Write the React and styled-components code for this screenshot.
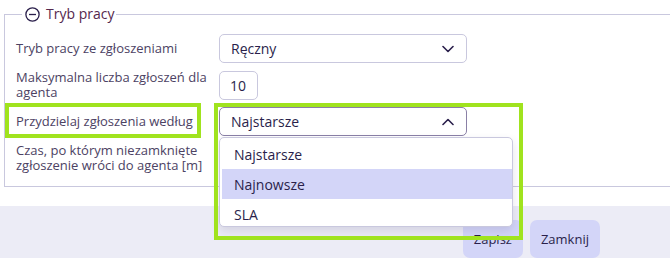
import React from "react";
import styled, { createGlobalStyle } from "styled-components";

const colors = {
  ink: "#2a1f4b",
  label: "#4c4263",
  line: "#c9c8de",
  lilac: "#d3d5f8",
  footer: "#ececf6",
  lime: "#a0e31e",
};

const GlobalStyle = createGlobalStyle`
  body {
    margin: 0;
    background: #fff;
    font-family: "Open Sans", "Liberation Sans", sans-serif;
    overflow: hidden;
  }
`;

const Page = styled.div`
  width: 670px;
  height: 258px;
  display: flex;
  flex-direction: column;
  overflow: hidden;
`;

const Fieldset = styled.fieldset`
  margin: 5px -20px 0 4px;
  padding: 11px 0 13px 11px;
  border: 1px solid ${colors.line};
  border-radius: 0;
`;

const Legend = styled.legend`
  display: flex;
  align-items: center;
  gap: 6px;
  padding: 0 2px 0 3px;
  margin-left: 6px;
  color: #55284d;
  font-size: 14px;
  line-height: 18px;
`;

const Grid = styled.div`
  display: grid;
  grid-template-columns: 203px 1fr;
  row-gap: 7px;
`;

const Label = styled.div`
  position: relative;
  display: flex;
  align-items: center;
  color: ${colors.label};
  font-size: 13px;
  line-height: 15px;
  padding-right: 8px;
`;

const Cell = styled.div`
  position: relative;
  display: flex;
  align-items: center;
`;

const Frame = styled.div`
  position: absolute;
  box-sizing: border-box;
  border: 4px solid ${colors.lime};
  pointer-events: none;
  z-index: 5;
`;

const Select = styled.div`
  width: 248px;
  height: 29px;
  box-sizing: border-box;
  display: flex;
  align-items: center;
  justify-content: space-between;
  padding: 0 12px 0 11px;
  border: 1px solid ${(p) => (p.$open ? "#8a80a6" : colors.line)};
  border-radius: 5px;
  color: ${colors.ink};
  font-size: 14px;
  background: #fff;
`;

const NumberBox = styled.div`
  width: 39px;
  height: 29px;
  box-sizing: border-box;
  display: flex;
  align-items: center;
  padding-left: 10px;
  border: 1px solid ${colors.line};
  border-radius: 5px;
  color: ${colors.ink};
  font-size: 14px;
`;

const Menu = styled.div`
  position: absolute;
  top: 30px;
  left: 0;
  width: 294px;
  height: 90px;
  box-sizing: border-box;
  padding: 1px 0 0 2px;
  background: #fff;
  border: 1px solid ${colors.line};
  border-radius: 5px;
  box-shadow: 0 4px 10px rgba(40, 30, 80, 0.12);
  overflow: hidden;
  z-index: 4;
`;

const Option = styled.div`
  height: 30px;
  display: flex;
  align-items: center;
  padding-left: 12px;
  color: ${colors.ink};
  font-size: 14px;
  background: ${(p) => (p.$active ? colors.lilac : "transparent")};
`;

const Footer = styled.div`
  margin-top: 19px;
  flex: 1;
  background: ${colors.footer};
  display: flex;
  justify-content: flex-end;
  align-items: flex-start;
  gap: 7px;
  padding: 14px 70px 0 0;
`;

const Button = styled.button`
  height: 38px;
  padding: 0 11px;
  border: none;
  border-radius: 7px;
  background: ${colors.lilac};
  color: ${colors.ink};
  font-family: inherit;
  font-size: 13px;
  font-weight: 500;
`;

const Chevron = ({ up }) => (
  <svg width="12" height="8" viewBox="0 0 12 8">
    <polyline
      points={up ? "1,6.5 6,1.5 11,6.5" : "1,1.5 6,6.5 11,1.5"}
      fill="none"
      stroke={colors.ink}
      strokeWidth="1.6"
      strokeLinecap="round"
      strokeLinejoin="round"
    />
  </svg>
);

const MinusCircle = () => (
  <svg width="15" height="15" viewBox="0 0 15 15">
    <circle cx="7.5" cy="7.5" r="6.6" fill="none" stroke={colors.ink} strokeWidth="1.3" />
    <line x1="4" y1="7.5" x2="11" y2="7.5" stroke={colors.ink} strokeWidth="1.3" />
  </svg>
);

export default function App() {
  const options = ["Najstarsze", "Najnowsze", "SLA"];
  return (
    <Page>
      <GlobalStyle />
      <Fieldset>
        <Legend>
          <MinusCircle />
          Tryb pracy
        </Legend>
        <Grid>
          <Label>Tryb pracy ze zgłoszeniami</Label>
          <Cell>
            <Select>
              Ręczny
              <Chevron />
            </Select>
          </Cell>

          <Label>Maksymalna liczba zgłoszeń dla agenta</Label>
          <Cell>
            <NumberBox>10</NumberBox>
          </Cell>

          <Label>
            Przydzielaj zgłoszenia według
            <Frame style={{ left: -11, top: -4, width: 196, height: 35 }} />
          </Label>
          <Cell>
            <Select $open>
              Najstarsze
              <Chevron up />
            </Select>
            <Menu>
              {options.map((o) => (
                <Option key={o} $active={o === "Najnowsze"}>
                  {o}
                </Option>
              ))}
            </Menu>
            <Frame style={{ left: -5, top: -4, width: 309, height: 137 }} />
          </Cell>

          <Label>Czas, po którym niezamknięte zgłoszenie wróci do agenta [m]</Label>
          <Cell />
        </Grid>
      </Fieldset>
      <Footer>
        <Button>Zapisz</Button>
        <Button>Zamknij</Button>
      </Footer>
    </Page>
  );
}
